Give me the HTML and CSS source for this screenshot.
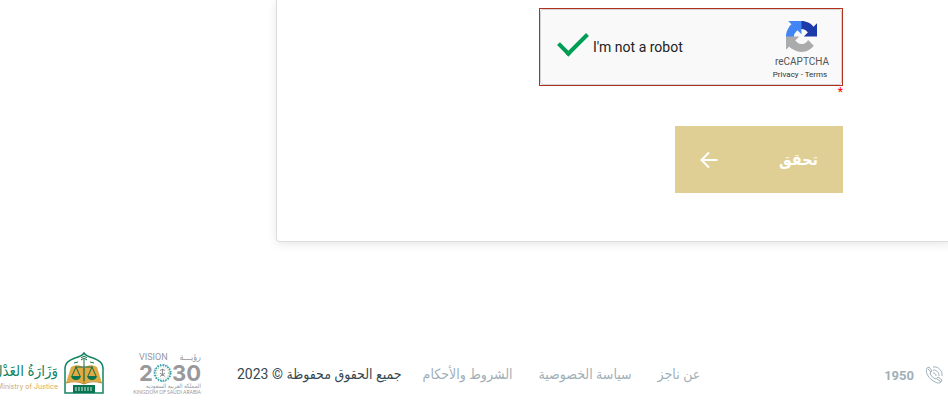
FILE: index.html
```html
<!DOCTYPE html>
<html lang="ar" dir="rtl">
<head>
    <meta charset="UTF-8">
    <meta name="viewport" content="width=device-width, initial-scale=1.0">
    <title>ناجز</title>
    <link rel="stylesheet" href="styles.css">
</head>
<body>
    <main class="card">
        <form class="verify-form">
            <div class="captcha-frame" dir="ltr" lang="en">
                <div class="captcha">
                    <label class="captcha-label">
                        <input type="checkbox" class="captcha-check" checked>
                        I'm not a robot
                    </label>
                    <div class="captcha-brand">
                        <svg class="captcha-logo" viewBox="0 0 64 64" aria-hidden="true">
                            <path d="M64 32V4.700l-7.200 7.100C51 4.700 42 .1 32 .1c-10.400 0-19.600 5-25.400 12.600l11.700 11.900a15.500 15.500 0 0 1 4.800-5.300c2-1.600 4.900-2.900 9-2.900 5.400.2 10.200 3 12.900 7.200l-8.300 8.300z" fill="#1c3aa9"/>
                            <path d="M31.900.1H4.600l7.200 7.200C4.600 13.100 0 22 0 32c0 10.400 5 19.600 12.600 25.500l11.900-11.700a15.500 15.500 0 0 1-5.300-4.800c-1.600-2-2.900-4.900-2.900-9 .2-5.400 3-10.200 7.200-12.900l8.400 8.300z" fill="#4285f4"/>
                            <path d="M0 32v27.300l7.200-7.100C13 59.300 22 63.900 32 63.900c10.400 0 19.600-5 25.400-12.600L45.700 39.400a15.500 15.500 0 0 1-4.800 5.300c-2 1.600-4.900 2.900-9 2.900-5.400-.2-10.200-3-12.900-7.200l8.300-8.300z" fill="#ababab"/>
                        </svg>
                        <div class="captcha-name">reCAPTCHA</div>
                        <div class="captcha-terms"><a href="#">Privacy</a> - <a href="#">Terms</a></div>
                    </div>
                </div>
            </div>
            <div class="required">*</div>
            <button type="button" class="submit">
                <span>تحقق</span>
                <svg class="submit-arrow" viewBox="0 0 18 18" aria-hidden="true">
                    <path d="M17.500 9H1.500M9 1.500L1.500 9L9 16.500"/>
                </svg>
            </button>
        </form>
    </main>

    <footer class="footer">
        <a href="#" class="phone">
            <svg class="phone-icon" viewBox="0 0 18 18" aria-hidden="true">
                <path d="M2 2l2-1 3 4-2 2c1 3 3 5 6 6l2-2 4 3-1 2c-2 2-5 1-9-2C3 11 0 6 2 2z"/>
                <path d="M3 3l3 3M12 13l4 3M8 1c5-1 10 4 9 9M8 4c4 0 6 2 6 6M8 7c2 0 3 1 3 3"/>
            </svg>
            <span>1950</span>
        </a>
        <div class="footer-main">
            <nav class="links">
                <a href="#">عن ناجز</a>
                <a href="#">سياسة الخصوصية</a>
                <a href="#">الشروط والأحكام</a>
            </nav>
            <div class="copyright">جميع الحقوق محفوظة © 2023</div>
            <div class="vision">
                <div class="vision-title"><span>رؤيـــة</span><span>VISION</span></div>
                <div class="vision-year" dir="ltr">
                    <span>2</span>
                    <svg class="vision-star" viewBox="0 0 22 22" aria-hidden="true">
                        <circle cx="11" cy="11" r="9" stroke="#3ca8b4" stroke-width="2" stroke-dasharray="2 1"/>
                        <circle cx="11" cy="11" r="7" stroke="#7cbb63" stroke-dasharray="1 2"/>
                        <circle cx="11" cy="11" r="10" stroke="#1d76a8" stroke-dasharray="1 3"/>
                        <path d="M11 6v8M8 8l3-1 3 1M8 15l6-4M14 15l-6-4" stroke="#77777c"/>
                    </svg>
                    <span>30</span>
                </div>
                <div class="vision-ar">المملكة العربية السعودية</div>
                <div class="vision-en">KINGDOM OF SAUDI ARABIA</div>
            </div>
            <div class="ministry">
                <svg class="ministry-emblem" viewBox="0 0 40 42" aria-hidden="true">
                    <path d="M1 41V17C1 10 6 8 11 6C15 5 18 4 20 1C22 4 25 5 29 6C34 8 39 10 39 17V41Z" fill="#fff" stroke="#138463" stroke-width="1.500"/>
                    <path d="M2 31L7 15C12 12 17 13 20 16C23 13 28 12 33 15L38 31C31 28 24 29 20 32C16 29 9 28 2 31Z" fill="#deaa43"/>
                    <path d="M20 16v15" stroke="#a87b22"/>
                    <path d="M2 31q10-3 18 1q8-4 18-1" fill="none" stroke="#b98a2c"/>
                    <path d="M9 33h22v8H9z" fill="#087552"/>
                    <path d="M20 7v22M11 15h18M12 15L8 24M12 15l4 9M28 15l-4 9M28 15l4 9M10 11l4-1M26 10l4 1M17 6l3-2 3 2M17 8l3-2 3 2" fill="none" stroke="#176b43"/>
                    <path d="M7 24h10q-1 4-5 4t-5-4M23 24h10q-1 4-5 4t-5-4" fill="#087552"/>
                    <path d="M11 36h18M11 38h18" stroke="#d7ebe3" stroke-dasharray="2 1"/>
                </svg>
                <div class="ministry-text">
                    <div class="ministry-ar">وَزَارَةُ العَدْل</div>
                    <div class="ministry-en"><span dir="ltr">Ministry of Justice</span></div>
                </div>
            </div>
        </div>
    </footer>
</body>
</html>
```
FILE: styles.css
```css
* {
    box-sizing: border-box;
}

body {
    margin: 0;
    background-color: #fff;
    font-family: Roboto, "DejaVu Sans Condensed", "DejaVu Sans", sans-serif;
    overflow: hidden;
}

a {
    color: inherit;
    text-decoration: none;
}

.card {
    margin-right: -4px;
    margin-left: 276px;
    padding: 8px 108px 48px 24px;
    border: 1px solid #ddd;
    border-top: none;
    border-radius: 0 0 4px 4px;
    box-shadow: 0 2px 10px rgba(0, 0, 0, 0.1);
}

.verify-form {
    display: flex;
    flex-direction: column;
    align-items: flex-start;
}

.captcha-frame {
    width: 304px;
    border: 1px solid #b0301c;
}

.captcha {
    display: flex;
    justify-content: space-between;
    height: 76px;
    padding: 0 12px 0 18px;
    background-color: #f9f9f9;
    border: 1px solid #d3d3d3;
    border-radius: 3px;
}

.captcha-label {
    display: flex;
    align-items: center;
    gap: 6px;
    font-size: 14px;
    color: #222;
}

.captcha-check {
    appearance: none;
    width: 28px;
    height: 28px;
    margin: 0;
}

.captcha-check::after {
    content: "";
    display: block;
    width: 12px;
    height: 25px;
    margin-top: -7px;
    margin-left: 6px;
    border: solid #009e55;
    border-width: 0 4px 4px 0;
    transform: rotate(45deg);
}

.captcha-brand {
    display: flex;
    flex-direction: column;
    align-items: center;
    padding-top: 11px;
    color: #555;
}

.captcha-logo {
    width: 31px;
    height: 31px;
    margin-left: 4px;
}

.captcha-name {
    margin-left: 4px;
    padding-top: 2px;
    font-size: 10px;
    line-height: 16px;
}

.captcha-terms {
    font-size: 8px;
    line-height: 10px;
    color: #333;
}

.required {
    font-size: 12px;
    line-height: 12px;
    color: #f00;
}

.submit {
    display: flex;
    align-items: center;
    justify-content: space-between;
    width: 168px;
    height: 67px;
    margin-top: 28px;
    padding: 0 25px;
    border: none;
    background-color: #e0cf95;
    color: #fff;
    font-family: inherit;
    font-size: 16px;
    font-weight: bold;
    cursor: pointer;
}

.submit-arrow {
    width: 18px;
    height: 18px;
    fill: none;
    stroke: #fff;
    stroke-width: 2;
}

.footer {
    display: flex;
    align-items: center;
    justify-content: space-between;
    margin-top: 109px;
    padding-right: 5px;
    color: #9fb0b8;
    white-space: nowrap;
}

.phone {
    display: flex;
    align-items: center;
    gap: 11px;
    padding-top: 4px;
    font-size: 13px;
    font-weight: bold;
}

.phone-icon {
    width: 18px;
    height: 18px;
    fill: none;
    stroke: #9fb0b8;
}

.footer-main,
.links {
    display: flex;
    align-items: center;
}

.links {
    gap: 26px;
    padding-top: 2px;
    font-size: 14px;
}

.copyright {
    margin-right: 21px;
    margin-left: 36px;
    padding-top: 2px;
    font-size: 14px;
    color: #354850;
}

.vision {
    width: 62px;
    margin-left: 35px;
    color: #98989d;
}

.vision-title {
    display: flex;
    justify-content: space-between;
    font-size: 9px;
    line-height: 12px;
}

.vision-year {
    display: flex;
    align-items: center;
    justify-content: space-between;
    font-family: Inter, sans-serif;
    font-size: 22px;
    font-weight: bold;
    line-height: 20px;
}

.vision-star {
    width: 20px;
    height: 20px;
    fill: none;
}

.vision-ar {
    font-size: 6px;
    line-height: 6px;
}

.vision-en {
    font-family: Lato, sans-serif;
    font-size: 5px;
    line-height: 6px;
}

.ministry {
    display: flex;
    align-items: center;
    gap: 6px;
}

.ministry-emblem {
    width: 40px;
    height: 42px;
}

.ministry-text {
    width: 58px;
    padding-top: 4px;
}

.ministry-ar {
    font-size: 15px;
    line-height: 24px;
    color: #138463;
}

.ministry-en {
    font-family: Inter, sans-serif;
    font-size: 7px;
    line-height: 8px;
    color: #d2ad5c;
}
```
